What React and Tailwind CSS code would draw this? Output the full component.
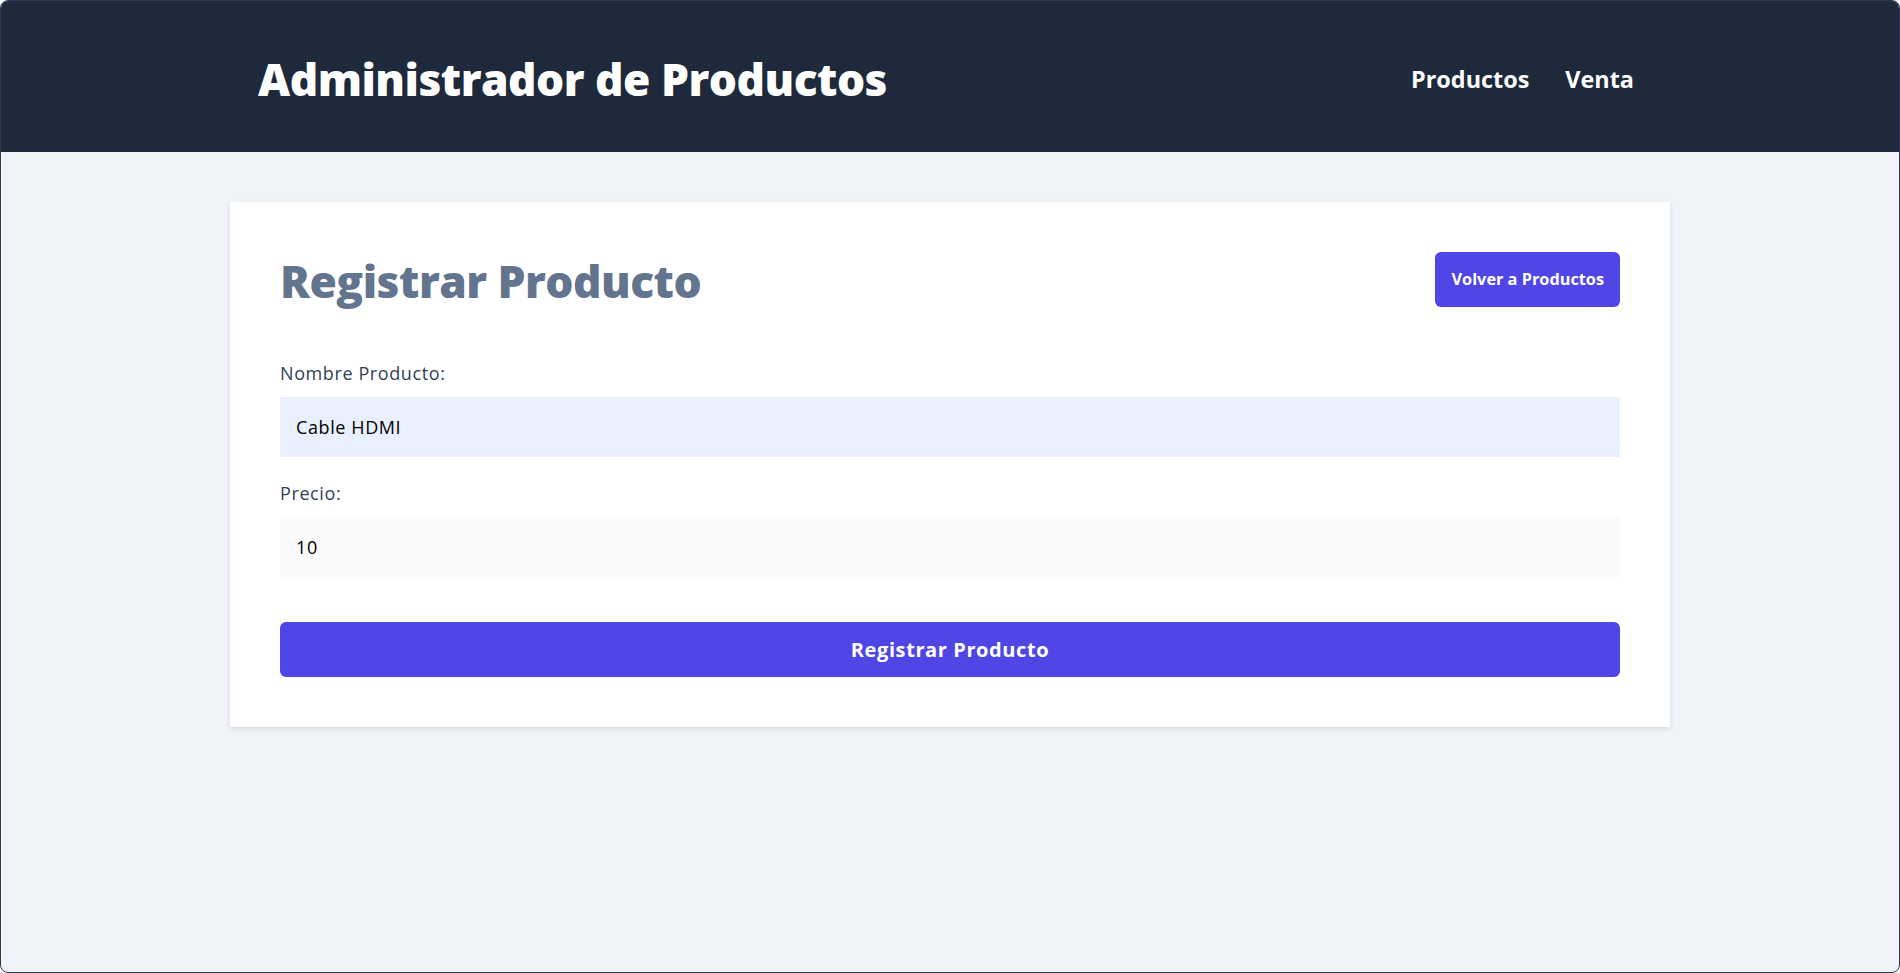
import React, { useState } from 'react';

const font = { fontFamily: '"Open Sans", "Noto Sans", sans-serif' };

const App = () => {
  const [nombre, setNombre] = useState('Cable HDMI');
  const [precio, setPrecio] = useState('10');

  return (
    <div
      className="h-[973px] bg-[#f0f4f8] border border-[#2c3a55] rounded-lg overflow-hidden"
      style={font}
    >
      {/* Header */}
      <header className="bg-[#1e293b] h-[151px]">
        <div className="w-[1440px] mx-auto h-full pl-7 pr-9 pt-[6px] flex items-center justify-between">
          <h1 className="text-[44.3px] font-extrabold text-white tracking-[-0.5px]">Administrador de Productos</h1>
          <nav className="flex items-center gap-[36px]">
            <a href="#" className="text-[23.4px] font-bold text-white">Productos</a>
            <a href="#" className="text-[23.4px] font-bold text-white">Venta</a>
          </nav>
        </div>
      </header>

      {/* Formulario */}
      <main className="pt-[50px]">
        <div className="w-[1440px] mx-auto bg-white p-[50px] shadow-[0_2px_5px_rgba(15,23,42,0.12)]">
          <div className="flex items-center justify-between h-[55px]">
            <h2 className="text-[44.3px] font-extrabold text-slate-500 tracking-[-0.5px] pt-[3px]">Registrar Producto</h2>
            <button className="h-[55px] px-4 rounded-md bg-[#4f46e5] text-white text-[16.3px] font-bold">
              Volver a Productos
            </button>
          </div>

          <form className="mt-[52px]" onSubmit={e => e.preventDefault()}>
            <div className="mb-[22px]">
              <label className="block text-[18px] tracking-[0.6px] leading-7 text-slate-700 mb-[10px]">Nombre Producto:</label>
              <input
                type="text"
                value={nombre}
                onChange={e => setNombre(e.target.value)}
                className="w-full h-[60px] px-4 bg-[#e8f0fe] text-[18px] tracking-[0.6px] text-black outline-none"
              />
            </div>
            <div>
              <label className="block text-[18px] tracking-[0.6px] leading-7 text-slate-700 mb-[10px]">Precio:</label>
              <input
                type="number"
                value={precio}
                onChange={e => setPrecio(e.target.value)}
                className="w-full h-[60px] px-4 bg-slate-50 text-[18px] tracking-[0.6px] text-black outline-none"
              />
            </div>
            <button
              type="submit"
              className="mt-[45px] w-full h-[55px] rounded-md bg-[#4f46e5] text-white text-[20px] tracking-[0.6px] font-bold"
            >
              Registrar Producto
            </button>
          </form>
        </div>
      </main>
    </div>
  );
};

export default App;
